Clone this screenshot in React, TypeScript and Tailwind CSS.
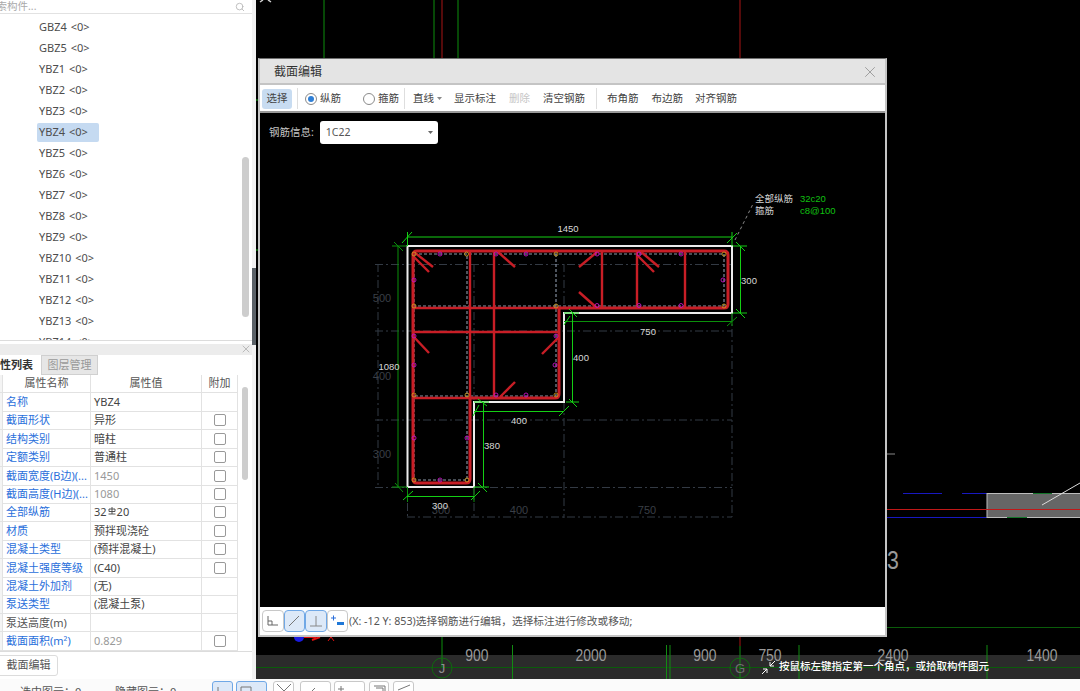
import { Search, X } from 'lucide-react'

const font = '[font-family:"Noto_Sans","Noto_Sans_CJK_SC",sans-serif]'

const treeItems = ['GBZ4', 'GBZ5', 'YBZ1', 'YBZ2', 'YBZ3', 'YBZ4', 'YBZ5', 'YBZ6', 'YBZ7', 'YBZ8', 'YBZ9', 'YBZ10', 'YBZ11', 'YBZ12', 'YBZ13', 'YBZ14']

const props = [
  { name: '名称', value: 'YBZ4', blue: true, box: false },
  { name: '截面形状', value: '异形', blue: true, box: true },
  { name: '结构类别', value: '暗柱', blue: true, box: true },
  { name: '定额类别', value: '普通柱', blue: true, box: true },
  { name: '截面宽度(B边)(...', value: '1450', blue: true, box: true, grey: true },
  { name: '截面高度(H边)(...', value: '1080', blue: true, box: true, grey: true },
  { name: '全部纵筋', value: 'rebar', blue: true, box: true },
  { name: '材质', value: '预拌现浇砼', blue: true, box: true },
  { name: '混凝土类型', value: '(预拌混凝土)', blue: true, box: true },
  { name: '混凝土强度等级', value: '(C40)', blue: true, box: true },
  { name: '混凝土外加剂', value: '(无)', blue: true, box: false },
  { name: '泵送类型', value: '(混凝土泵)', blue: true, box: false },
  { name: '泵送高度(m)', value: '', blue: false, box: false },
  { name: '截面面积(m²)', value: '0.829', blue: true, box: true, grey: true },
]

// drawing coordinates below are page pixels, the viewBox of each svg maps them
const brightDims = [
  [407, 237, 732, 237], [407.5, 232, 407.5, 246], [732, 232, 732, 246], [402, 243, 412, 232], [727, 243, 737, 233],
  [740.5, 246, 740.5, 313], [733, 246, 747, 246], [733, 313, 747, 313], [736, 242, 745, 251], [736, 309, 745, 318],
  [572.5, 313, 572.5, 402], [564, 313, 579, 313], [566, 402, 579, 402], [569, 309, 577, 317], [569, 399, 577, 407], [564, 325, 570, 316],
  [483.5, 402, 483.5, 487], [474, 402, 489, 402], [474, 487, 489, 487], [478, 399, 487, 406], [478, 483, 487, 492],
  [407, 496.5, 474, 496.5], [403, 500, 413, 491], [471, 500, 480, 491],
  [474, 411.5, 564, 411.5], [559, 416, 569, 406], [473, 416, 479, 405],
]
const darkDims = [
  [398, 246, 398, 487], [392, 246, 407, 246], [392, 487, 407, 487], [394, 242, 403, 251], [395, 483, 403, 492],
  [564, 321.5, 732, 321.5], [732, 313, 732, 326], [727, 326, 737, 317],
  [407.5, 487, 407.5, 502], [474, 487, 474, 502],
]
const greyDash = [
  [375, 264.5, 732, 264.5], [375, 331, 732, 331], [375, 420, 732, 420], [375, 487.5, 407, 487.5], [474, 487.5, 732, 487.5], [407, 517, 732, 517],
  [378, 264, 378, 488], [474, 264, 474, 402], [564, 264, 564, 313], [732, 313, 732, 517], [407.5, 487, 407.5, 518], [474, 487, 474, 518], [564, 402, 564, 518],
]
const redLines = [
  [470, 251, 470, 398], [494, 251, 494, 398], [602, 251, 602, 308], [637, 251, 637, 308], [685, 251, 685, 308],
  [413, 308, 559, 308], [413, 332, 559, 332], [413, 398, 470, 398],
  [414, 252, 433, 267], [413, 256, 429, 272], [498, 252, 515, 267], [579, 267, 597, 252], [579, 292, 597, 308],
  [413, 336, 429, 353], [542, 354, 558, 338], [640, 251, 659, 267], [637, 255, 654, 272], [500, 397, 515, 382],
]
const yellowMarks = [[414, 254], [466.5, 254], [556, 254], [414, 306], [556, 306], [414, 395], [467, 395], [556, 395], [414, 480], [467, 480], [724, 254], [724, 306]]
const magentaMarks = [[440, 254], [496, 254], [526, 254], [597, 254], [639, 254], [681, 254], [414, 280], [723, 280], [597, 305.5], [639, 305.5], [681, 305.5], [414, 336], [556, 336], [414, 365], [555, 365], [496, 395], [526, 395], [414, 438], [467, 438], [440, 480]]
const dimLabels = [
  { t: '1450', x: 568, y: 232 }, { t: '300', x: 749, y: 284 }, { t: '750', x: 648, y: 335 }, { t: '400', x: 581, y: 361 },
  { t: '1080', x: 389, y: 370 }, { t: '400', x: 519, y: 424 }, { t: '380', x: 492, y: 449 }, { t: '300', x: 440, y: 509 },
]
const greyLabels = [
  { t: '500', x: 382, y: 302 }, { t: '400', x: 382, y: 380 }, { t: '300', x: 382, y: 458 }, { t: '300', x: 441, y: 514 }, { t: '400', x: 519, y: 514 }, { t: '750', x: 647, y: 514 },
]

function Segs({ lines, color, width = 1, dash }: { lines: number[][]; color: string; width?: number; dash?: string }) {
  return (
    <g stroke={color} strokeWidth={width} strokeDasharray={dash} fill="none">
      {lines.map((l, i) => (
        <line key={i} x1={l[0]} y1={l[1]} x2={l[2]} y2={l[3]} />
      ))}
    </g>
  )
}

function Caret({ className }: { className?: string }) {
  return (
    <svg className={className} width="5" height="3" viewBox="0 0 5 3">
      <path d="M0 0 H5 L2.5 3 Z" fill="currentColor" />
    </svg>
  )
}

function SectionDrawing() {
  return (
    <svg className="block h-full w-full" viewBox="260 113 625 494">
      <Segs lines={greyDash} color="#333a44" dash="8 3 2 3" />
      {greyLabels.map((l, i) => (
        <text key={i} x={l.x} y={l.y} textAnchor="middle" fontSize="11" fill="#3a3f46" fontFamily="Liberation Sans">{l.t}</text>
      ))}

      {/* stirrup outline */}
      <g stroke="#8d99aa" strokeWidth="1.1" strokeDasharray="3 2" fill="none">
        <path d="M414 254 H724 V306 H414 M414 254 V480 H467 V254 M556 254 V396 H414" />
      </g>

      <Segs lines={redLines} color="#c81e26" width={2.4} />
      <path d="M417 251 H724 Q728 251 728 255 V304 Q728 308 724 308 H559 V394 Q559 398 555 398 H470 V479 Q470 483 466 483 H417 Q413 483 413 479 V255 Q413 251 417 251 Z" fill="none" stroke="#c81e26" strokeWidth="3" />

      {yellowMarks.map((m, i) => (
        <circle key={i} cx={m[0]} cy={m[1]} r="2" fill="none" stroke="#d6a321" strokeWidth="0.8" />
      ))}
      {magentaMarks.map((m, i) => (
        <circle key={i} cx={m[0]} cy={m[1]} r="2" fill="none" stroke="#c412c4" strokeWidth="0.9" />
      ))}

      <path d="M407.5 246 H732 V313 H564 V402 H474 V487 H407.5 Z" fill="none" stroke="#ececec" strokeWidth="2" />

      <Segs lines={darkDims} color="#0b900b" />
      <Segs lines={brightDims} color="#14cf14" />

      {dimLabels.map((l, i) => (
        <text key={i} x={l.x} y={l.y} textAnchor="middle" fontSize="9.5" fill="#d8d8d8" fontFamily="Liberation Sans">{l.t}</text>
      ))}

      {/* note leader */}
      <path d="M735 240 L753 204" stroke="#888" strokeDasharray="3 3" fill="none" />
      <text x="755" y="202" fontSize="9.5" fill="#d4d4d4" fontFamily="Noto Sans CJK SC">全部纵筋</text>
      <text x="755" y="214" fontSize="9.5" fill="#d4d4d4" fontFamily="Noto Sans CJK SC">箍筋</text>
      <text x="800" y="202" fontSize="9.5" fill="#10c010" fontFamily="Liberation Sans">32c20</text>
      <text x="800" y="214" fontSize="9.5" fill="#10c010" fontFamily="Liberation Sans">c8@100</text>
    </svg>
  )
}

function BackgroundCad() {
  const labelProps = { fontSize: 17, fill: '#9a9a9a', fontFamily: 'Liberation Sans', textAnchor: 'middle' as const }
  return (
    <svg className="absolute inset-0 h-full w-full" viewBox="256 0 824 679">
      <Segs lines={[[324, 0, 324, 59], [434, 0, 434, 59], [458, 0, 458, 59], [442, 636, 442, 668]]} color="#0c8f0c" />
      <Segs lines={[[442, 0, 442, 59], [740, 0, 740, 59], [740, 636, 740, 646]]} color="#a81414" />
      <path d="M260 2 L263 0 M268 0 L271 2" stroke="#d0d0d0" strokeWidth="1.5" fill="none" />
      <Segs lines={[[256, 100, 259, 100], [256, 250, 259, 250]]} color="#10b010" />

      {/* grid axis strip */}
      <Segs lines={[[256, 667.5, 1080, 667.5], [887, 627.5, 1080, 627.5]]} color="#0a5c0a" />
      <Segs lines={[[512.5, 645, 512.5, 679], [666.5, 645, 666.5, 679], [670, 645, 670, 679], [799, 645, 799, 679], [987, 645, 987, 679], [740, 646, 740, 679]]} color="#128a12" />
      <circle cx="442" cy="668" r="10" fill="none" stroke="#0f6a0f" />
      <circle cx="740" cy="668" r="10" fill="none" stroke="#0f6a0f" />
      <text x="442" y="673" textAnchor="middle" fontSize="13" fill="#909090" fontFamily="Liberation Sans">J</text>
      <text x="740" y="673" textAnchor="middle" fontSize="13" fill="#707070" fontFamily="Liberation Sans">G</text>
      <g transform="scale(0.82 1)">
        <text {...labelProps} x={477 / 0.82} y="661">900</text>
        <text {...labelProps} x={591 / 0.82} y="661">2000</text>
        <text {...labelProps} x={705 / 0.82} y="661">900</text>
        <text {...labelProps} x={770 / 0.82} y="661">750</text>
        <text {...labelProps} x={893 / 0.82} y="661">2400</text>
        <text {...labelProps} x={1042 / 0.82} y="661">1400</text>
        <text {...labelProps} x={893 / 0.82} y="569" fontSize="26">3</text>
      </g>

      {/* wall stub on the right of the dialog */}
      <Segs lines={[[903, 493.5, 942, 493.5], [962, 493.5, 987, 493.5], [887, 517.5, 987, 517.5]]} color="#1818c0" />
      <rect x="987" y="493.5" width="100" height="24" fill="#666" stroke="#bdbdbd" />
      <Segs lines={[[1033, 493.5, 1052, 493.5], [1007, 517.5, 1027, 517.5]]} color="#14752a" />
      <Segs lines={[[887, 509.5, 1080, 509.5]]} color="#c01818" />
      <Segs lines={[[1042, 505, 1080, 483]]} color="#dcdcdc" />
      <Segs lines={[[887, 454, 895, 454]]} color="#888" />

      {/* ucs arrows under the dialog */}
      <circle cx="299" cy="637" r="5" fill="#1a1ae0" />
      <path d="M304 637 H316 M312 640 L320 637" stroke="#e01010" strokeWidth="2" fill="none" />
      <path d="M328 641 L331 637 L334 641" stroke="#e01010" fill="none" />
    </svg>
  )
}

function ToolSep() {
  return <span className="block h-[21px] w-px bg-[#dedede]" />
}

function Radio({ on, label, className }: { on?: boolean; label: string; className: string }) {
  return (
    <span className={`flex items-center gap-[3px] ${className}`}>
      <span className="flex h-[12px] w-[12px] items-center justify-center rounded-full border border-[#8a8a8a]">
        {on && <span className="h-[6px] w-[6px] rounded-full bg-[#2f7fd6]" />}
      </span>
      {label}
    </span>
  )
}

function StatusButton({ active, children }: { active?: boolean; children: React.ReactNode }) {
  return (
    <span className={`flex h-[22px] w-[21.5px] items-center justify-center rounded-[4px] border ${active ? 'border-[#70a8e6] bg-[#dde9f8]' : 'border-[#c8c8c8] bg-white'}`}>
      <svg width="16" height="16" viewBox="0 0 16 16" fill="none">{children}</svg>
    </span>
  )
}

function RebarGlyph() {
  return (
    <svg className="mx-[1px] -mt-[4px] inline-block" width="8" height="8" viewBox="0 0 8 8" fill="none" stroke="#444" strokeWidth="0.9">
      <path d="M4 0 V7 M1 2 H7 V4.5 H1 Z M0.5 7 H7.5" />
    </svg>
  )
}

function SectionDialog() {
  return (
    <div className={`absolute left-[258px] top-[58px] flex h-[579px] w-[629px] flex-col border-x-2 border-b-2 border-t border-x-[#c4c4c4] border-b-[#c4c4c4] border-t-[#6e6e6e] bg-[#e4e4e4] ${font}`}>
      <div className="flex h-[24px] items-center justify-between pl-[14px] pr-[6px] pt-[1px] text-[12px] text-[#333]">
        <span>截面编辑</span>
        <X size={18} strokeWidth={0.9} className="text-[#7d7d7d]" />
      </div>
      <div className="flex h-[30px] items-center border-y-2 border-y-[#c4c4c4] border-b-[#9a9a9a] bg-white pl-[2px] pt-[1px] text-[10.5px] text-[#444]">
        <span className="flex h-[20px] w-[30px] items-center justify-center rounded-[3px] bg-[#c8dcf1]">选择</span>
        <span className="ml-[5px]"><ToolSep /></span>
        <Radio on label="纵筋" className="ml-[7px]" />
        <Radio label="箍筋" className="ml-[22px]" />
        <span className="ml-[5px]"><ToolSep /></span>
        <span className="ml-[8px] flex items-center gap-[3px]">直线<Caret className="text-[#888]" /></span>
        <span className="ml-[12px]">显示标注</span>
        <span className="ml-[13px] text-[#c6c6c6]">删除</span>
        <span className="ml-[13px]">清空钢筋</span>
        <span className="ml-[11px]"><ToolSep /></span>
        <span className="ml-[10px]">布角筋</span>
        <span className="ml-[13px]">布边筋</span>
        <span className="ml-[12px]">对齐钢筋</span>
      </div>
      <div className="relative min-h-0 flex-1 bg-black">
        <SectionDrawing />
        <div className="absolute left-[9px] top-[8px] flex items-center gap-[6px] text-[10.5px] text-[#c4c4c4]">
          钢筋信息:
          <span className="flex h-[23px] w-[118px] items-center justify-between rounded-[3px] bg-white pl-[6px] pr-[5px] text-[#555]">
            1C22
            <Caret className="text-[#666]" />
          </span>
        </div>
      </div>
      <div className="flex h-[28px] items-center bg-white pl-[2px] text-[10.7px] text-[#555]">
        <StatusButton><path d="M3 3 V12 H13 M3 8 H7 V12" stroke="#666" /></StatusButton>
        <StatusButton active><path d="M3 13 L13 3" stroke="#777" /></StatusButton>
        <StatusButton active><path d="M8 3 V13 M2 13 H14" stroke="#888" /></StatusButton>
        <StatusButton><path d="M2 5 H7 M4.5 2.5 V7.5" stroke="#2a6fdb" /><rect x="8" y="9" width="7" height="3" fill="#1f78d8" /></StatusButton>
        <span className="ml-[1px] whitespace-nowrap">(X: -12 Y: 853)选择钢筋进行编辑，选择标注进行修改或移动;</span>
      </div>
    </div>
  )
}

function LeftPanel() {
  return (
    <div className={`relative flex h-full w-[256px] shrink-0 flex-col bg-white pr-[4px] ${font}`}>
      {/* splitter */}
      <div className="absolute bottom-0 right-0 top-0 w-[4px] bg-[#f2f2f2]" />
      <div className="absolute right-0 top-[268px] h-[77px] w-[4px] bg-[#5b6268]" />

      <div className="flex h-[14px] shrink-0 items-center justify-between overflow-hidden border-b border-[#e2e2e2] pr-[7px] text-[10.5px] text-[#aaa]">
        <span className="-ml-[14px]">搜索构件...</span>
        <Search size={10} className="text-[#b5b5b5]" />
      </div>

      <div className="relative h-[326px] shrink-0 overflow-hidden pt-[3px]">
        {treeItems.map((item) => (
          <div key={item} className="flex h-[21px] items-center pl-[37px] text-[11px] text-[#4d4d4d]">
            <span className={`flex h-[19px] items-center gap-[4px] rounded-[2px] pl-[2px] pr-[11px] ${item === 'YBZ4' ? 'bg-[#c5daf1]' : ''}`}>
              <span>{item}</span>
              <span>{'<0>'}</span>
            </span>
          </div>
        ))}
        <div className="absolute left-[242px] top-[143px] h-[160px] w-[7px] rounded bg-[#cdcdcd]" />
      </div>

      <div className="flex h-[14px] shrink-0 items-center border-t border-[#dcdcdc] pt-[3px]">
        <span className="flex h-[11px] w-full items-center justify-end bg-[#ececec]"><X size={12} strokeWidth={1.5} className="text-[#aaa]" /></span>
      </div>

      <div className="flex h-[21px] shrink-0 items-end text-[11px]">
        <span className="-ml-[11px] w-[52px] pb-[2px] font-bold text-[#333]">属性列表</span>
        <span className="flex h-[20px] w-[57px] items-center justify-center border border-[#d0d0d0] bg-[#e6e6e6] text-[#999]">图层管理</span>
      </div>

      <div className="relative h-[277px] shrink-0 overflow-hidden border-b border-[#dcdcdc] text-[11px]">
        <div className="grid h-[18px] grid-cols-[3px_88px_111px_36px] text-[#555]">
          <span className="border-b border-r border-[#e2e2e2] bg-[#f4f4f4]" />
          <span className="border-b border-r border-[#e2e2e2] text-center">属性名称</span>
          <span className="border-b border-r border-[#e2e2e2] text-center">属性值</span>
          <span className="border-b border-r border-[#e2e2e2] text-center">附加</span>
        </div>
        {props.map((row) => (
          <div key={row.name} className="grid h-[18.4px] grid-cols-[3px_88px_111px_36px] items-stretch leading-[18px]">
            <span className="border-b border-r border-[#e2e2e2] bg-[#f4f4f4]" />
            <span className={`overflow-hidden whitespace-nowrap border-b border-r border-[#e2e2e2] pl-[3px] ${row.blue ? 'text-[#2a6fdb]' : 'text-[#555]'}`}>{row.name}</span>
            <span className={`border-b border-r border-[#e2e2e2] pl-[3px] ${row.grey ? 'text-[#999]' : 'text-[#444]'}`}>
              {row.value === 'rebar' ? <>32<RebarGlyph />20</> : row.value}
            </span>
            <span className="flex items-center justify-center border-b border-r border-[#e2e2e2]">
              {row.box && <span className="h-[12px] w-[12px] rounded-[2px] border border-[#999]" />}
            </span>
          </div>
        ))}
        <div className="absolute left-[242px] top-[12px] h-[93px] w-[6px] rounded bg-[#cdcdcd]" />
      </div>

      <div className="pt-[3px]">
        <span className="-ml-px flex h-[21px] w-[59px] items-center justify-center rounded-r-[3px] border border-[#dcdcdc] text-[11px] text-[#555]">截面编辑</span>
      </div>
    </div>
  )
}

function BottomTool({ active, className, d }: { active?: boolean; className: string; d: string }) {
  return (
    <span className={`h-[22px] shrink-0 overflow-hidden rounded-[3px] border ${active ? 'border-[#70a8e6] bg-[#dde9f8]' : 'border-[#c8c8c8] bg-white'} ${className}`}>
      <svg width="20" height="20" viewBox="0 0 20 20" fill="none" stroke="#777"><path d={d} /></svg>
    </span>
  )
}

function BottomBar() {
  return (
    <div className={`flex h-[12px] shrink-0 items-start overflow-hidden bg-[#fbfbfb] text-[11px] text-[#555] ${font}`}>
      <span className="ml-[20px] mt-[5px] w-[95px]">选中图元：0</span>
      <span className="mt-[5px] w-[97px]">隐藏图元：0</span>
      <div className="mt-[2px] flex">
        <BottomTool active className="w-[21px]" d="M5 5 V20" />
        <BottomTool active className="ml-[3px] w-[31px]" d="M4 5 H14 V20 M4 5 V20" />
        <BottomTool className="ml-[6px] w-[21px]" d="M3 2 L10 9 L17 2 M10 9 L3 16 M10 9 L17 16" />
        <BottomTool className="ml-[6px] w-[31px]" d="M8 12 L14 6" />
        <BottomTool className="ml-[3px] w-[31px]" d="M3 7 H9 M6 4 V10" />
        <BottomTool className="ml-[4px] w-[20px]" d="M4 4 H15 V20 M6 6 H13 V20" />
        <BottomTool className="ml-[4px] w-[21px]" d="M4 8 L16 3" />
      </div>
    </div>
  )
}

export default function App() {
  return (
    <div className="relative flex h-[691px] w-[1080px] flex-col overflow-hidden bg-black">
      <div className="flex min-h-0 flex-1">
        <LeftPanel />
        <div className="relative flex-1 bg-black">
          <div className="absolute bottom-0 left-0 right-0 h-[24px] bg-[#2b2b2b]" />
          <BackgroundCad />
          {/* cursor hint */}
          <div className={`absolute bottom-[4px] left-[505px] flex items-center gap-[3px] whitespace-nowrap text-[10.5px] font-medium text-white ${font}`}>
            <svg width="15" height="15" viewBox="0 0 15 15" fill="none" stroke="#fff">
              <path d="M1 14 L6 9 M2 9 H6 V13 M14 1 L9 6 M9 2 V6 H13" />
            </svg>
            按鼠标左键指定第一个角点，或拾取构件图元
          </div>
        </div>
      </div>
      <BottomBar />
      <SectionDialog />
    </div>
  )
}
